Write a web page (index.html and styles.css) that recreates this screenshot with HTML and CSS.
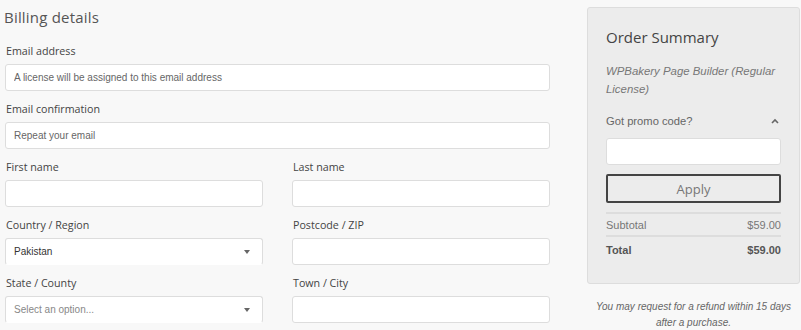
FILE: index.html
```html
<!DOCTYPE html>
<html lang="en">
<head>
    <meta charset="UTF-8">
    <title>Checkout</title>
    <link rel="stylesheet" href="styles.css">
</head>
<body>
    <div class="page">
        <div class="billing">
            <h2 class="title">Billing details</h2>
            <div class="field">
                <label>Email address</label>
                <input type="text" class="box" placeholder="A license will be assigned to this email address">
            </div>
            <div class="field">
                <label>Email confirmation</label>
                <input type="text" class="box" placeholder="Repeat your email">
            </div>
            <div class="row">
                <div class="field">
                    <label>First name</label>
                    <input type="text" class="box">
                </div>
                <div class="field">
                    <label>Last name</label>
                    <input type="text" class="box">
                </div>
            </div>
            <div class="row">
                <div class="field">
                    <label>Country / Region</label>
                    <div class="box select"><span>Pakistan</span><i class="caret"></i></div>
                </div>
                <div class="field">
                    <label>Postcode / ZIP</label>
                    <input type="text" class="box">
                </div>
            </div>
            <div class="row">
                <div class="field">
                    <label>State / County</label>
                    <div class="box select empty"><span>Select an option...</span><i class="caret"></i></div>
                </div>
                <div class="field">
                    <label>Town / City</label>
                    <input type="text" class="box">
                </div>
            </div>
        </div>
        <div class="side">
            <div class="summary">
                <h3>Order Summary</h3>
                <p class="product">WPBakery Page Builder (Regular License)</p>
                <div class="promo">
                    <span>Got promo code?</span>
                    <svg width="8" height="6" viewBox="0 0 8 6"><path d="M1 5 L4 2 L7 5" fill="none" stroke="#666" stroke-width="1.6"/></svg>
                </div>
                <input type="text" class="box promo-input">
                <button class="apply">Apply</button>
                <div class="line sub"><span>Subtotal</span><span>$59.00</span></div>
                <div class="line total"><span>Total</span><span>$59.00</span></div>
            </div>
            <p class="refund">You may request for a refund within 15 days after a purchase.</p>
        </div>
    </div>
</body>
</html>
```

FILE: styles.css
```css
*{
    margin:0;
    padding:0;
    box-sizing:border-box;
}
body{
    background:#f8f8f8;
    font-family:"Open Sans",sans-serif;
    color:#444;
    overflow:hidden;
}
.page{
    display:flex;
    gap:37px;
    padding:0 0 0 5px;
}
.billing{
    width:545px;
}
.title{
    font-weight:400;
    font-size:15px;
    color:#555;
    margin:7px 0 16px -1px;
    letter-spacing:0.2px;
}
.field{
    margin-bottom:10px;
}
.field label{
    display:block;
    font-size:10.7px;
    color:#444;
    margin:0 0 5px 1px;
    line-height:16px;
}
.box{
    display:block;
    width:100%;
    height:27px;
    background:#fff;
    border:1px solid #ddd;
    border-radius:3px;
    padding:0 8px;
    font-family:"Liberation Sans",Arial,sans-serif;
    font-size:10px;
    color:#333;
    outline:none;
}
.box::placeholder{
    color:#666;
}
.row{
    display:grid;
    grid-template-columns:258px 258px;
    gap:29px;
}
.select{
    display:flex;
    align-items:center;
    justify-content:space-between;
    border-bottom-color:transparent;
    padding-right:12px;
}
.select.empty span{
    color:#888;
}
.caret{
    width:0;
    height:0;
    border-left:3.5px solid transparent;
    border-right:3.5px solid transparent;
    border-top:4px solid #666;
}
.side{
    width:213px;
    padding-top:7px;
}
.summary{
    background:#ececec;
    border:1px solid #ddd;
    border-radius:3px;
    padding:19px 18px 30px 18px;
    height:277px;
}
.summary h3{
    font-weight:400;
    font-size:15px;
    color:#444;
    margin-bottom:15px;
}
.product{
    font-family:"Liberation Sans",Arial,sans-serif;
    font-style:italic;
    font-size:11.4px;
    line-height:18px;
    color:#777;
    margin-bottom:17px;
}
.promo{
    display:flex;
    justify-content:space-between;
    align-items:center;
    font-family:"Liberation Sans",Arial,sans-serif;
    font-size:11.2px;
    color:#666;
    padding-right:2px;
    margin-bottom:11px;
}
.promo-input{
    height:27px;
}
.apply{
    display:block;
    width:100%;
    height:29px;
    margin-top:9px;
    background:#ececec;
    border:2px solid #444;
    border-radius:2px;
    font-family:"Open Sans",sans-serif;
    font-size:13px;
    color:#777;
}
.line{
    display:flex;
    justify-content:space-between;
    font-family:"Liberation Sans",Arial,sans-serif;
    font-size:11px;
    color:#777;
    border-top:2px solid #ddd;
}
.sub{
    margin-top:9px;
    padding:5px 0 4px;
}
.total{
    font-weight:bold;
    color:#555;
    padding:7px 0;
}
.refund{
    font-family:"Liberation Sans",Arial,sans-serif;
    font-style:italic;
    font-size:10px;
    line-height:16px;
    color:#666;
    text-align:center;
    margin-top:15px;
}
```
